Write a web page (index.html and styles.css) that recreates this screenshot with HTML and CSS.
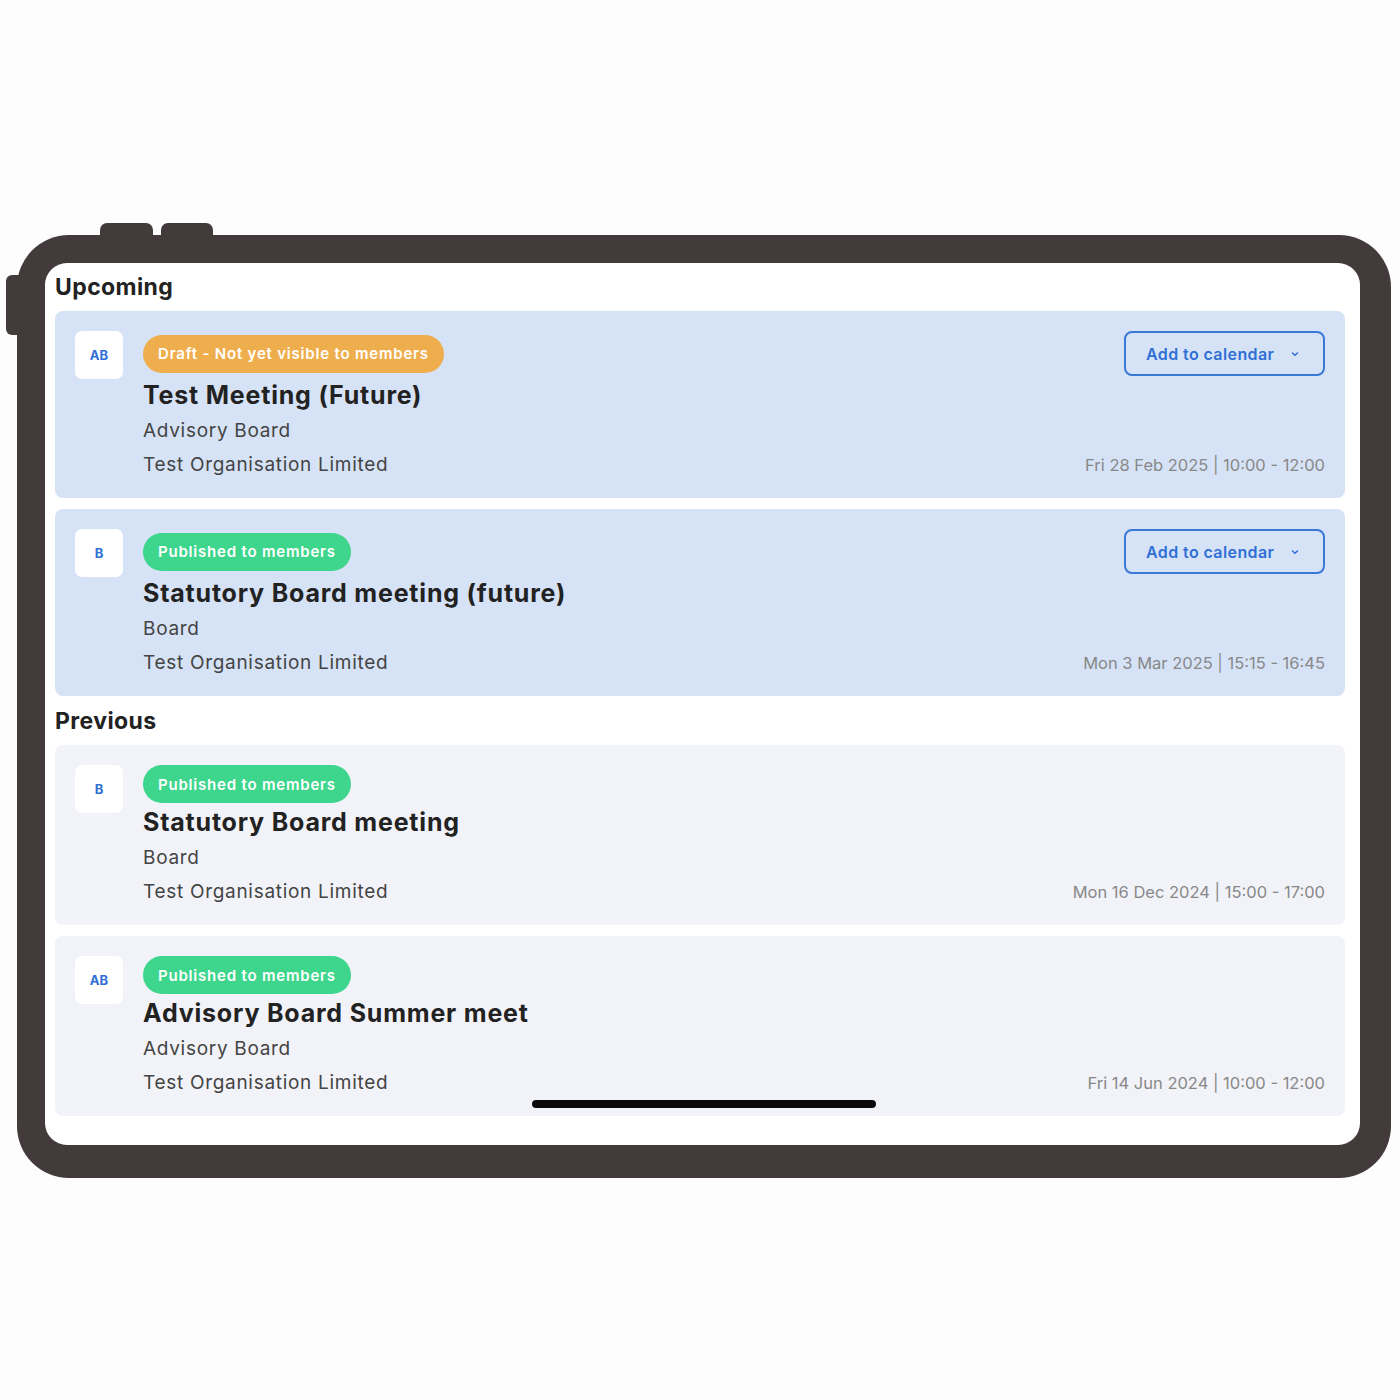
FILE: index.html
```html
<!doctype html>
<html>
<head>
  <meta charset="utf-8">
  <title>Meetings</title>
  <link rel="stylesheet" href="styles.css">
</head>
<body>
  <div class="stage">
    <div class="device">
      <span class="hw-btn hw-top-a"></span>
      <span class="hw-btn hw-top-b"></span>
      <span class="hw-btn hw-side"></span>

      <div class="screen">
        <h2 class="section-title">Upcoming</h2>

        <div class="meeting meeting-upcoming">
          <div class="avatar">AB</div>
          <div class="meeting-body">
            <div class="meeting-top">
              <span class="pill pill-draft">Draft - Not yet visible to members</span>
              <button class="cal-button">Add to calendar
                <svg width="10" height="10" viewBox="0 0 10 10"><path d="M2.5 4 L5 6.3 L7.5 4" fill="none" stroke="currentColor" stroke-width="1.5" stroke-linecap="round" stroke-linejoin="round"/></svg>
              </button>
            </div>
            <div class="meeting-title">Test Meeting (Future)</div>
            <div class="meeting-line">Advisory Board</div>
            <div class="meeting-bottom">
              <span class="meeting-line">Test Organisation Limited</span>
              <span class="meeting-date">Fri 28 Feb 2025 | 10:00 - 12:00</span>
            </div>
          </div>
        </div>

        <div class="meeting meeting-upcoming">
          <div class="avatar">B</div>
          <div class="meeting-body">
            <div class="meeting-top">
              <span class="pill pill-published">Published to members</span>
              <button class="cal-button">Add to calendar
                <svg width="10" height="10" viewBox="0 0 10 10"><path d="M2.5 4 L5 6.3 L7.5 4" fill="none" stroke="currentColor" stroke-width="1.5" stroke-linecap="round" stroke-linejoin="round"/></svg>
              </button>
            </div>
            <div class="meeting-title">Statutory Board meeting (future)</div>
            <div class="meeting-line">Board</div>
            <div class="meeting-bottom">
              <span class="meeting-line">Test Organisation Limited</span>
              <span class="meeting-date">Mon 3 Mar 2025 | 15:15 - 16:45</span>
            </div>
          </div>
        </div>

        <h2 class="section-title">Previous</h2>

        <div class="meeting meeting-previous">
          <div class="avatar">B</div>
          <div class="meeting-body">
            <div class="meeting-top">
              <span class="pill pill-published">Published to members</span>
            </div>
            <div class="meeting-title">Statutory Board meeting</div>
            <div class="meeting-line">Board</div>
            <div class="meeting-bottom">
              <span class="meeting-line">Test Organisation Limited</span>
              <span class="meeting-date">Mon 16 Dec 2024 | 15:00 - 17:00</span>
            </div>
          </div>
        </div>

        <div class="meeting meeting-previous">
          <div class="avatar">AB</div>
          <div class="meeting-body">
            <div class="meeting-top">
              <span class="pill pill-published">Published to members</span>
            </div>
            <div class="meeting-title">Advisory Board Summer meet</div>
            <div class="meeting-line">Advisory Board</div>
            <div class="meeting-bottom">
              <span class="meeting-line">Test Organisation Limited</span>
              <span class="meeting-date">Fri 14 Jun 2024 | 10:00 - 12:00</span>
            </div>
          </div>
        </div>

        <div class="home-bar"></div>
      </div>
    </div>
  </div>
</body>
</html>
```

FILE: styles.css
```css
/* ========== Base ========== */
body {
  margin: 0;
  background: #fdfdfe;
  font-family: "Inter", "Noto Sans", sans-serif;
  color: #222;
}

.stage {
  padding: 235px 0 0 17px;
}

/* ========== Tablet frame ========== */
.device {
  position: relative;
  width: 1374px;
  box-sizing: border-box;
  padding: 28px 31px 33px 28px;
  background: #433a3b;
  border-radius: 52px;
}

.hw-btn {
  position: absolute;
  background: #433a3b;
}

.hw-top-a {
  top: -12px;
  left: 83px;
  width: 53px;
  height: 20px;
  border-radius: 7px 7px 0 0;
}

.hw-top-b {
  top: -12px;
  left: 144px;
  width: 52px;
  height: 20px;
  border-radius: 7px 7px 0 0;
}

.hw-side {
  top: 40px;
  left: -11px;
  width: 16px;
  height: 60px;
  border-radius: 6px 0 0 6px;
}

.screen {
  position: relative;
  height: 882px;
  box-sizing: border-box;
  padding: 10px 15px 0 10px;
  background: #fff;
  border-radius: 22px;
  overflow: hidden;
}

.home-bar {
  position: absolute;
  left: 50%;
  bottom: 37px;
  width: 344px;
  height: 8px;
  margin-left: -171px;
  background: #0b0909;
  border-radius: 4px;
}

/* ========== Sections ========== */
.section-title {
  margin: 0 0 10px;
  font-size: 23px;
  line-height: 28px;
  font-weight: 700;
  letter-spacing: 0.4px;
  color: #222;
}

.meeting {
  display: flex;
  gap: 20px;
  padding: 20px 20px 16px 20px;
  margin-bottom: 11px;
  border-radius: 8px;
}

.meeting-upcoming {
  background: #d6e3f6;
}

.meeting-previous {
  background: #f2f3f9;
}

.avatar {
  flex: none;
  width: 48px;
  height: 48px;
  display: flex;
  align-items: center;
  justify-content: center;
  background: #fff;
  border-radius: 7px;
  font-size: 13px;
  font-weight: 700;
  color: #2f6fd6;
}

.meeting-body {
  flex: 1;
}

.meeting-top {
  display: flex;
  justify-content: space-between;
  align-items: center;
}

.pill {
  display: inline-flex;
  align-items: center;
  height: 38px;
  padding: 0 15px;
  border-radius: 19px;
  font-size: 15px;
  font-weight: 600;
  letter-spacing: 0.8px;
  color: #fff;
}

.pill-draft {
  background: #efae4e;
}

.pill-published {
  background: #3dd68c;
}

.cal-button {
  display: flex;
  align-items: center;
  gap: 16px;
  width: 201px;
  height: 45px;
  padding: 0 20px;
  box-sizing: border-box;
  background: transparent;
  border: 2px solid #3a78d8;
  border-radius: 8px;
  font-family: inherit;
  font-size: 16px;
  font-weight: 600;
  letter-spacing: 0.4px;
  color: #2f6fd6;
}

.meeting-title {
  font-size: 25px;
  line-height: 38px;
  font-weight: 700;
  letter-spacing: 0.8px;
  color: #222;
}

.meeting-line {
  font-size: 19px;
  line-height: 34px;
  letter-spacing: 0.7px;
  color: #444;
}

.meeting-bottom {
  display: flex;
  justify-content: space-between;
  align-items: center;
}

.meeting-date {
  font-size: 16.5px;
  color: #888;
}
```
